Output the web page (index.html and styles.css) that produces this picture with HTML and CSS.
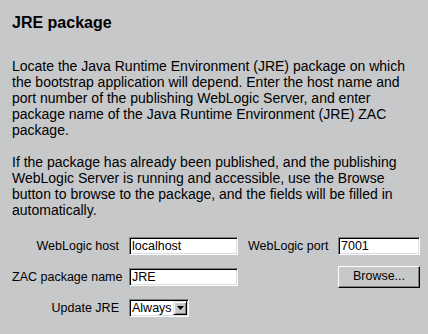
FILE: index.html
```html
<!DOCTYPE html>
<html>
<head>
<meta charset="utf-8">
<link rel="stylesheet" href="styles.css">
</head>
<body>
<div class="page">
  <h1 class="title">JRE package</h1>
  <p class="para">Locate the Java Runtime Environment (JRE) package on which the bootstrap application will depend. Enter the host name and port number of the publishing WebLogic Server, and enter package name of the Java Runtime Environment (JRE) ZAC package.</p>
  <p class="para">If the package has already been published, and the publishing WebLogic Server is running and accessible, use the Browse button to browse to the package, and the fields will be filled in automatically.</p>
  <div class="form">
    <div class="label">WebLogic host</div>
    <div class="field">localhost</div>
    <div class="label">WebLogic port</div>
    <div class="field">7001</div>

    <div class="label">ZAC package name</div>
    <div class="field">JRE</div>
    <div></div>
    <div class="button">Browse...</div>

    <div class="label">Update JRE</div>
    <div class="select">
      <span class="select-text">Always</span>
      <span class="select-btn"><svg width="7" height="4" viewBox="0 0 7 4"><path d="M0 0H7L3.5 4Z" fill="#000"/></svg></span>
    </div>
  </div>
</div>
</body>
</html>
```

FILE: styles.css
```css
html, body {
  margin: 0;
  padding: 0;
  background: #c7c8ca;
}
body {
  width: 428px;
  height: 334px;
  overflow: hidden;
  font-family: "Liberation Sans", Arial, sans-serif;
  color: #000;
}
.page {
  padding: 13px 12px 0 12px;
}
.title {
  margin: 0;
  font-size: 16px;
  line-height: 20px;
  font-weight: bold;
}
.para {
  margin: 25px 0 0 0;
  font-size: 14px;
  line-height: 16px;
  width: 400px;
}
.para + .para {
  margin-top: 16px;
}
.form {
  margin-top: 19px;
  display: grid;
  grid-template-columns: 107px 109px 80px 82px;
  column-gap: 10px;
  row-gap: 11px;
  grid-template-rows: 18px 22px 18px;
  align-items: center;
  font-size: 12.5px;
}
.label {
  text-align: right;
  line-height: 16px;
  white-space: nowrap;
}
.field {
  box-sizing: border-box;
  height: 18px;
  background: #fff;
  border-top: 1px solid #808080;
  border-left: 1px solid #808080;
  border-bottom: 1px solid #fff;
  border-right: 1px solid #fff;
  box-shadow: inset 1px 1px 0 #000, inset -1px -1px 0 #dcdcdc;
  padding: 0 2px;
  line-height: 16px;
  white-space: nowrap;
  overflow: hidden;
}
.button {
  box-sizing: border-box;
  height: 22px;
  background: #c7c8ca;
  border-top: 1px solid #fff;
  border-left: 1px solid #fff;
  border-bottom: 1px solid #000;
  border-right: 1px solid #000;
  box-shadow: inset -1px -1px 0 #808080;
  text-align: center;
  line-height: 19px;
}
.select {
  box-sizing: border-box;
  width: 60px;
  height: 18px;
  display: flex;
  align-items: stretch;
  background: #fff;
  border-top: 1px solid #808080;
  border-left: 1px solid #808080;
  border-bottom: 1px solid #fff;
  border-right: 1px solid #fff;
  box-shadow: inset 1px 1px 0 #000, inset -1px -1px 0 #dcdcdc;
  padding: 1px;
}
.select-text {
  flex: 1;
  line-height: 14px;
  padding-left: 1px;
  white-space: nowrap;
  overflow: hidden;
}
.select-btn {
  box-sizing: border-box;
  width: 14px;
  display: flex;
  align-items: center;
  justify-content: center;
  background: #c7c8ca;
  border-top: 1px solid #dcdcdc;
  border-left: 1px solid #dcdcdc;
  border-bottom: 1px solid #000;
  border-right: 1px solid #000;
  box-shadow: inset 1px 1px 0 #fff, inset -1px -1px 0 #808080;
}
```
